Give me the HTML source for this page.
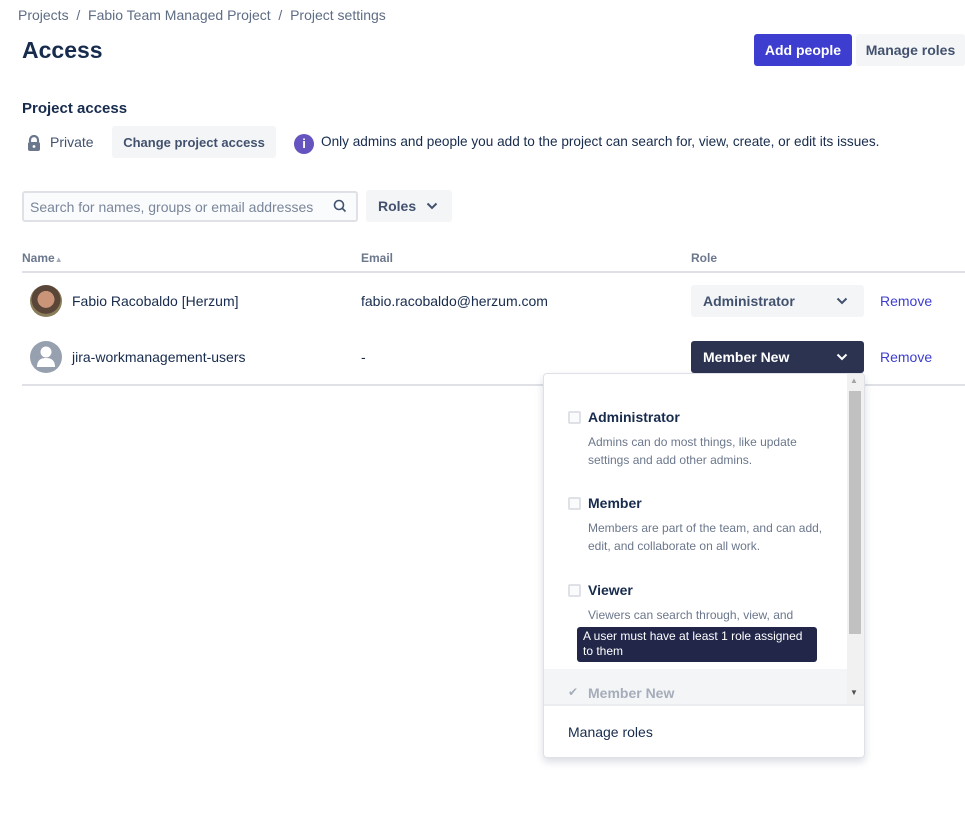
<!DOCTYPE html>
<html><head><style>
*{margin:0;padding:0;box-sizing:border-box}
body{width:965px;height:823px;background:#fff;font-family:"Liberation Sans",sans-serif;color:#172b4d;position:relative;overflow:hidden;font-size:14px}
.a{position:absolute;white-space:nowrap}
.btn{position:absolute;border-radius:3px;background:#f4f5f7;color:#42526e;font-weight:bold;display:flex;align-items:center;justify-content:center;font-size:14px}
.grey{color:#6b778c}
.desc{color:#6b778c;font-size:12px;line-height:18px;white-space:normal;width:250px}
.cb{position:absolute;width:13px;height:13px;border:2px solid #dfe1e6;border-radius:2px;background:#fafbfc}
</style></head><body>
<div class="a grey" style="left:18px;top:7px;color:#5e6c84">Projects &nbsp;/&nbsp; Fabio Team Managed Project &nbsp;/&nbsp; Project settings</div>
<div class="a" style="left:22px;top:37px;font-size:23px;font-weight:bold">Access</div>
<div class="btn" style="left:754px;top:34px;width:98px;height:32px;background:#3d3ecf;color:#fff">Add people</div>
<div class="btn" style="left:856px;top:34px;width:109px;height:32px">Manage roles</div>
<div class="a" style="left:22px;top:100px;font-size:15px;font-weight:bold">Project access</div>
<svg class="a" style="left:27px;top:135px" width="14" height="17" viewBox="0 0 14 17"><path d="M3 7V5a4 4 0 0 1 8 0v2" stroke="#6b778c" stroke-width="2.2" fill="none"/><rect x="1" y="7" width="12" height="9" rx="2" fill="#6b778c"/><circle cx="7" cy="11.5" r="1.4" fill="#fff"/></svg>
<div class="a" style="left:50px;top:134px;color:#42526e">Private</div>
<div class="btn" style="left:112px;top:126px;width:164px;height:32px;font-size:13px">Change project access</div>
<div class="a" style="left:294px;top:134px;width:20px;height:20px;border-radius:50%;background:#6554c0;color:#fff;font-weight:bold;font-size:13px;text-align:center;line-height:20px">i</div>
<div class="a" style="left:321px;top:134px;color:#172b4d;font-size:13.6px">Only admins and people you add to the project can search for, view, create, or edit its issues.</div>
<div class="a" style="left:22px;top:191px;width:336px;height:31px;border:2px solid #dfe1e6;border-radius:3px;background:#fafbfc"></div>
<div class="a" style="left:30px;top:199px;color:#7a869a">Search for names, groups or email addresses</div>
<svg class="a" style="left:333px;top:199px" width="14" height="14" viewBox="0 0 14 14"><circle cx="6" cy="6" r="4.5" stroke="#42526e" stroke-width="1.6" fill="none"/><path d="M9.5 9.5l3 3" stroke="#42526e" stroke-width="1.6"/></svg>
<div class="btn" style="left:366px;top:190px;width:86px;height:32px;justify-content:flex-start;padding-left:12px">Roles<svg style="margin-left:10px" width="12" height="8" viewBox="0 0 12 8"><path d="M1.5 1.5l4.5 4.5 4.5-4.5" stroke="#42526e" stroke-width="2" fill="none"/></svg></div>
<div class="a grey" style="left:22px;top:251px;font-size:12px;font-weight:bold">Name<span style="font-size:8px;color:#a5adba">▲</span></div>
<div class="a grey" style="left:361px;top:251px;font-size:12px;font-weight:bold">Email</div>
<div class="a grey" style="left:691px;top:251px;font-size:12px;font-weight:bold">Role</div>
<div class="a" style="left:22px;top:271px;width:943px;height:2px;background:#dfe1e6"></div>
<div class="a" style="left:30px;top:285px;width:32px;height:32px;border-radius:50%;background:radial-gradient(circle at 50% 45%,#c99478 0 35%,#5a4638 36% 60%,#8a7d5a 61%)"></div>
<div class="a" style="left:72px;top:293px">Fabio Racobaldo [Herzum]</div>
<div class="a" style="left:361px;top:293px">fabio.racobaldo@herzum.com</div>
<div class="btn" style="left:691px;top:285px;width:173px;height:32px;justify-content:space-between;padding:0 16px 0 12px">Administrator<svg width="12" height="8" viewBox="0 0 12 8"><path d="M1.5 1.5l4.5 4.5 4.5-4.5" stroke="#42526e" stroke-width="2" fill="none"/></svg></div>
<div class="a" style="left:880px;top:293px;color:#3d3ecf">Remove</div>
<svg class="a" style="left:30px;top:341px" width="32" height="32" viewBox="0 0 32 32"><circle cx="16" cy="16" r="16" fill="#97a0af"/><circle cx="16" cy="11" r="5.5" fill="#fff"/><path d="M7 26c0-7 4-9 9-9s9 2 9 9z" fill="#fff"/></svg>
<div class="a" style="left:72px;top:349px">jira-workmanagement-users</div>
<div class="a" style="left:361px;top:349px">-</div>
<div class="btn" style="left:691px;top:341px;width:173px;height:32px;justify-content:space-between;padding:0 16px 0 12px;background:#2c3350;color:#fff">Member New<svg width="12" height="8" viewBox="0 0 12 8"><path d="M1.5 1.5l4.5 4.5 4.5-4.5" stroke="#fff" stroke-width="2" fill="none"/></svg></div>
<div class="a" style="left:880px;top:349px;color:#3d3ecf">Remove</div>
<div class="a" style="left:22px;top:384px;width:943px;height:2px;background:#dfe1e6"></div>
<div class="a" style="left:543px;top:373px;width:322px;height:385px;background:#fff;border:1px solid #dfe1e6;border-radius:4px;box-shadow:0 4px 8px rgba(9,30,66,.15);overflow:hidden">
 <div class="a" style="left:303px;top:0;width:18px;height:330px;background:#f1f1f1"></div>
 <div class="a" style="left:305px;top:17px;width:12px;height:243px;background:#c1c1c1"></div>
 <div class="a" style="left:306px;top:2px;font-size:8px;color:#a3a3a3">▲</div>
 <div class="a" style="left:306px;top:314px;font-size:8px;color:#505050">▼</div>
 <div class="cb" style="left:24px;top:37px"></div>
 <div class="a" style="left:44px;top:35px;font-weight:bold">Administrator</div>
 <div class="a desc" style="left:44px;top:59px">Admins can do most things, like update settings and add other admins.</div>
 <div class="cb" style="left:24px;top:123px"></div>
 <div class="a" style="left:44px;top:121px;font-weight:bold">Member</div>
 <div class="a desc" style="left:44px;top:145px;width:260px">Members are part of the team, and can add, edit, and collaborate on all work.</div>
 <div class="cb" style="left:24px;top:210px"></div>
 <div class="a" style="left:44px;top:208px;font-weight:bold">Viewer</div>
 <div class="a desc" style="left:44px;top:232px">Viewers can search through, view, and</div>
 <div class="a" style="left:0;top:295px;width:303px;height:35px;background:#f4f5f7"></div>
 <div class="a" style="left:24px;top:311px;color:#a5adba;font-size:12px">✔</div>
 <div class="a" style="left:44px;top:311px;color:#a5adba;font-weight:bold">Member New</div>
 <div class="a" style="left:0;top:330px;width:322px;height:2px;background:#ebecf0"></div>
 <div class="a" style="left:24px;top:350px;color:#172b4d">Manage roles</div>
 <div class="a" style="left:33px;top:253px;width:240px;height:35px;background:#22274a;border-radius:3px;color:#fff;font-size:12px;line-height:15px;padding:2px 6px;white-space:normal">A user must have at least 1 role assigned to them</div>
</div>
</body></html>
